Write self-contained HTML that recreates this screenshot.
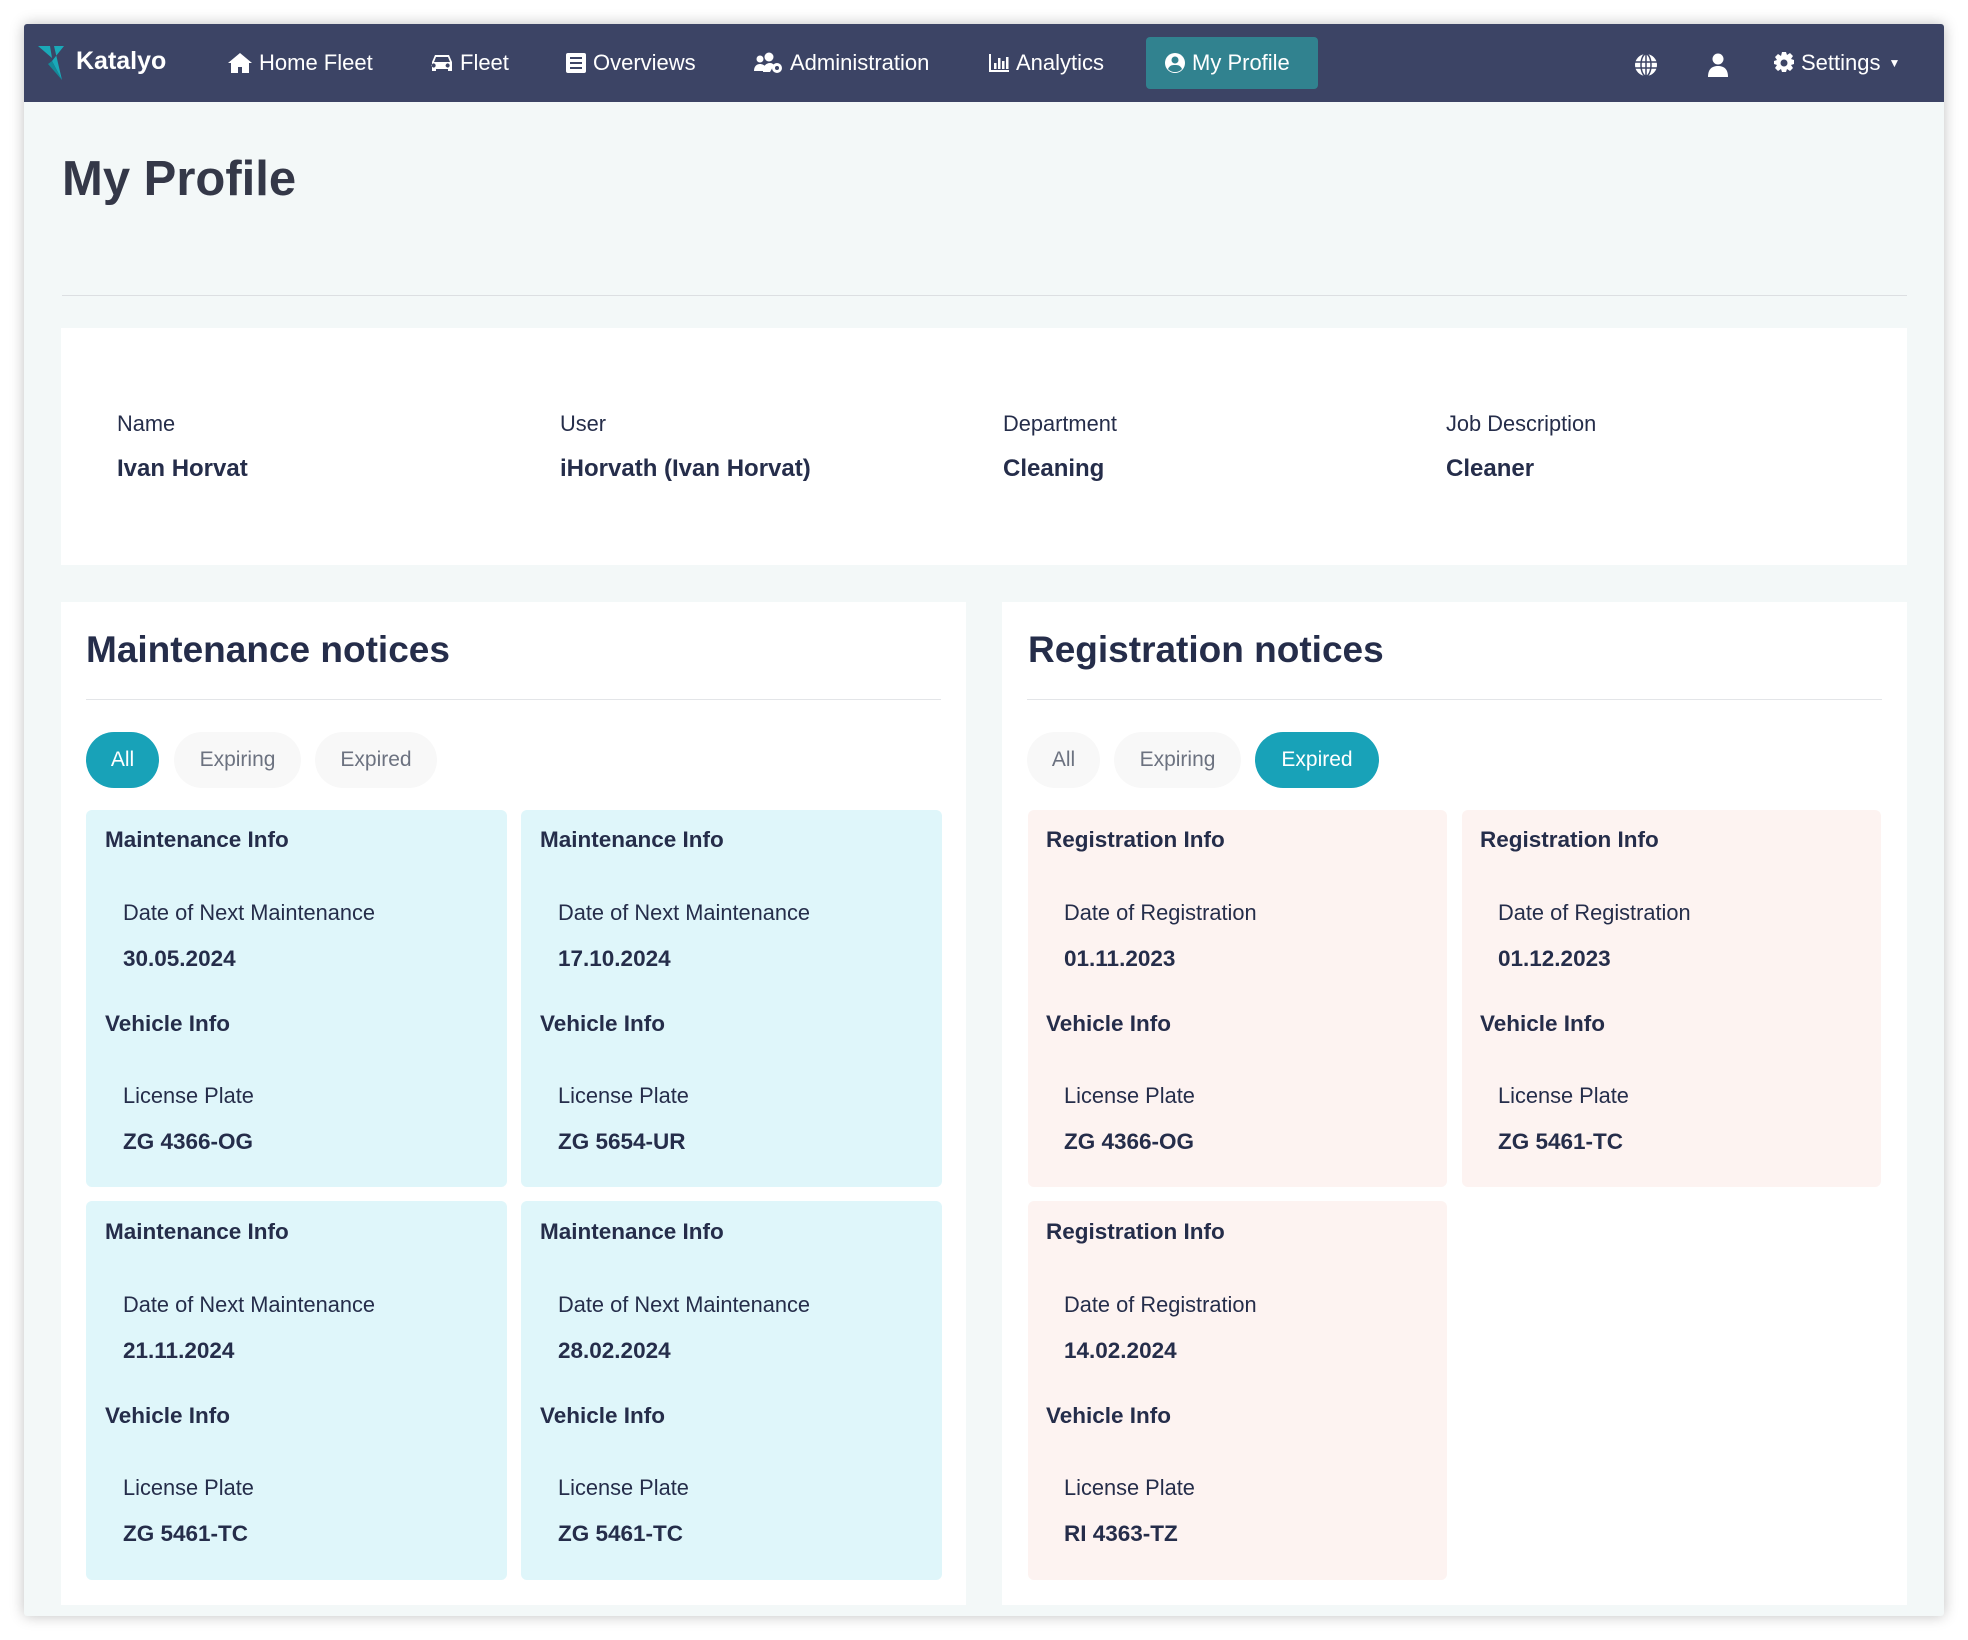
<!DOCTYPE html>
<html><head><meta charset="utf-8"><style>
*{margin:0;padding:0;box-sizing:border-box}
html,body{width:1968px;height:1640px;background:#fff;font-family:"Liberation Sans",Arial,sans-serif;overflow:hidden}
.win{position:absolute;left:24px;top:24px;width:1920px;height:1592px;background:#f3f8f8;box-shadow:0 0 14px rgba(0,0,0,.25);border-radius:3px;overflow:hidden}
.nav{position:absolute;left:0;top:0;width:1920px;height:78px;background:#3c4465}
.a{position:absolute;white-space:nowrap}
.ni{color:#fff;font-size:22px;top:26px;display:flex;align-items:center;gap:6px}
.ni svg{fill:#fff}
.t{color:#252d4a}
.card{position:absolute;border-radius:6px}
.m{background:#dff6fa}.r{background:#fdf3f1}
.pill{position:absolute;height:56px;border-radius:28px;font-size:21px;line-height:56px;text-align:center;background:#f8f8f8;color:#6c7280}
.pill.on{background:#18a2b8;color:#fff}
.h{font-size:22.5px;font-weight:bold}.l{font-size:21.8px}.v{font-size:22.5px;font-weight:bold}
.pl{font-size:21.8px}.pv{font-size:24px;font-weight:bold}
</style></head><body>
<div class="win">
 <div class="nav">
  <svg class="a" style="left:14px;top:20px" width="34" height="36" viewBox="0 0 34 36"><polygon points="0,2 12,2 14,14" fill="#1aa9b8"/><polygon points="16,2 26,2 14,17 24,36" fill="#1aa9b8"/><polygon points="14,17 24,36 10,20" fill="#138a99"/></svg>
  <div class="a" style="left:52px;top:23px;color:#fff;font-size:25px;font-weight:bold">Katalyo</div>
  <div class="a ni" style="left:203px"><svg width="26" height="22" viewBox="0 0 26 22"><path d="M13 1L1 11h3v10h7v-6h4v6h7V11h3z"/></svg>Home Fleet</div>
  <div class="a ni" style="left:406px"><svg width="24" height="20" viewBox="0 0 24 20"><path d="M5 2h14l3 7v9h-4v-2H6v2H2V9zM6 4l-2 5h16l-2-5zM5 11a2 2 0 100 3 2 2 0 000-3zm14 0a2 2 0 100 3 2 2 0 000-3z"/></svg>Fleet</div>
  <div class="a ni" style="left:541px"><svg width="22" height="22" viewBox="0 0 22 22"><rect x="1" y="1" width="20" height="20" rx="2"/><rect x="5" y="5" width="12" height="2" fill="#3c4465"/><rect x="5" y="10" width="12" height="2" fill="#3c4465"/><rect x="5" y="15" width="12" height="2" fill="#3c4465"/></svg>Overviews</div>
  <div class="a ni" style="left:730px"><svg width="30" height="22" viewBox="0 0 30 22"><circle cx="6" cy="7" r="3.5"/><circle cx="15" cy="5" r="4.5"/><path d="M0 19c0-5 3-7 6-7s5 2 6 3l-1 4z"/><path d="M9 20c0-6 3-9 7-9 2 0 3 1 4 2l-4 7z"/><circle cx="23" cy="16" r="5"/><circle cx="23" cy="16" r="2" fill="#3c4465"/></svg>Administration</div>
  <div class="a ni" style="left:964px"><svg width="22" height="20" viewBox="0 0 22 20"><path d="M1 1h2v16h18v2H1z"/><rect x="6" y="10" width="2.5" height="6"/><rect x="10" y="5" width="2.5" height="11"/><rect x="14" y="8" width="2.5" height="8"/><rect x="18" y="4" width="2.5" height="12"/></svg>Analytics</div>
  <div class="a" style="left:1122px;top:13px;width:172px;height:52px;background:#31828f;border-radius:4px"></div>
  <div class="a ni" style="left:1140px"><svg width="22" height="22" viewBox="0 0 22 22"><circle cx="11" cy="11" r="10"/><circle cx="11" cy="8" r="3.5" fill="#31828f"/><path d="M4 17c2-4 4-4 7-4s5 0 7 4c-2 2-4 3-7 3s-5-1-7-3z" fill="#31828f"/></svg>My Profile</div>
  <svg class="a" style="left:1610px;top:29px" width="24" height="24" viewBox="0 0 24 24"><circle cx="12" cy="12" r="11" fill="#fff"/><g stroke="#3c4465" stroke-width="1.5" fill="none"><ellipse cx="12" cy="12" rx="5" ry="11"/><line x1="12" y1="1" x2="12" y2="23"/><line x1="1" y1="9" x2="23" y2="9"/><line x1="1" y1="15" x2="23" y2="15"/></g></svg>
  <svg class="a" style="left:1683px;top:29px" width="22" height="24" viewBox="0 0 22 24"><circle cx="11" cy="6" r="5.5" fill="#fff"/><path d="M1 24c0-8 4-11 10-11s10 3 10 11z" fill="#fff"/></svg>
  <div class="a ni" style="left:1749px"><svg width="22" height="22" viewBox="0 0 22 22"><path d="M9 0h4l1 3 3-2 3 3-2 3 3 1v4l-3 1 2 3-3 3-3-2-1 3H9l-1-3-3 2-3-3 2-3-3-1V9l3-1-2-3 3-3 3 2z" fill="#fff"/><circle cx="11" cy="11" r="3.5" fill="#3c4465"/></svg>Settings<span style="font-size:12px;margin-left:2px">▼</span></div>
 </div>
 <div class="a t" style="left:38px;top:127px;font-size:49px;font-weight:bold;color:#343848">My Profile</div>
 <div class="a" style="left:38px;top:271px;width:1845px;height:1px;background:#dcdfe2"></div>
 <div class="a" style="left:37px;top:304px;width:1846px;height:237px;background:#fff"></div>
 <div class="a t pl" style="left:93px;top:387px">Name</div>
 <div class="a t pv" style="left:93px;top:431px">Ivan Horvat</div>
 <div class="a t pl" style="left:536px;top:387px">User</div>
 <div class="a t pv" style="left:536px;top:431px">iHorvath (Ivan Horvat)</div>
 <div class="a t pl" style="left:979px;top:387px">Department</div>
 <div class="a t pv" style="left:979px;top:431px">Cleaning</div>
 <div class="a t pl" style="left:1422px;top:387px">Job Description</div>
 <div class="a t pv" style="left:1422px;top:431px">Cleaner</div>

 <div class="a" style="left:37px;top:578px;width:905px;height:1003px;background:#fff"></div>
 <div class="a" style="left:978px;top:578px;width:905px;height:1003px;background:#fff"></div>
 <div class="a t" style="left:62px;top:605px;font-size:37px;font-weight:bold">Maintenance notices</div>
 <div class="a t" style="left:1004px;top:605px;font-size:37px;font-weight:bold">Registration notices</div>
 <div class="a" style="left:62px;top:675px;width:855px;height:1px;background:#e3e5e8"></div>
 <div class="a" style="left:1003px;top:675px;width:855px;height:1px;background:#e3e5e8"></div>
 <div class="pill on" style="left:62px;top:708px;width:73px">All</div>
 <div class="pill" style="left:150px;top:708px;width:127px">Expiring</div>
 <div class="pill" style="left:291px;top:708px;width:122px">Expired</div>
 <div class="pill" style="left:1003px;top:708px;width:73px">All</div>
 <div class="pill" style="left:1090px;top:708px;width:127px">Expiring</div>
 <div class="pill on" style="left:1231px;top:708px;width:124px">Expired</div>

 <div class="card m" style="left:62px;top:786px;width:421px;height:377px"></div>
 <div class="card m" style="left:497px;top:786px;width:421px;height:377px"></div>
 <div class="card m" style="left:62px;top:1177px;width:421px;height:379px"></div>
 <div class="card m" style="left:497px;top:1177px;width:421px;height:379px"></div>
 <div class="card r" style="left:1004px;top:786px;width:419px;height:377px"></div>
 <div class="card r" style="left:1438px;top:786px;width:419px;height:377px"></div>
 <div class="card r" style="left:1004px;top:1177px;width:419px;height:379px"></div>

 <div class="a t h" style="left:81px;top:803px">Maintenance Info</div><div class="a t l" style="left:99px;top:876px">Date of Next Maintenance</div><div class="a t v" style="left:99px;top:922px">30.05.2024</div><div class="a t h" style="left:81px;top:987px">Vehicle Info</div><div class="a t l" style="left:99px;top:1059px">License Plate</div><div class="a t v" style="left:99px;top:1105px">ZG 4366-OG</div>
 <div class="a t h" style="left:516px;top:803px">Maintenance Info</div><div class="a t l" style="left:534px;top:876px">Date of Next Maintenance</div><div class="a t v" style="left:534px;top:922px">17.10.2024</div><div class="a t h" style="left:516px;top:987px">Vehicle Info</div><div class="a t l" style="left:534px;top:1059px">License Plate</div><div class="a t v" style="left:534px;top:1105px">ZG 5654-UR</div>
 <div class="a t h" style="left:81px;top:1195px">Maintenance Info</div><div class="a t l" style="left:99px;top:1268px">Date of Next Maintenance</div><div class="a t v" style="left:99px;top:1314px">21.11.2024</div><div class="a t h" style="left:81px;top:1379px">Vehicle Info</div><div class="a t l" style="left:99px;top:1451px">License Plate</div><div class="a t v" style="left:99px;top:1497px">ZG 5461-TC</div>
 <div class="a t h" style="left:516px;top:1195px">Maintenance Info</div><div class="a t l" style="left:534px;top:1268px">Date of Next Maintenance</div><div class="a t v" style="left:534px;top:1314px">28.02.2024</div><div class="a t h" style="left:516px;top:1379px">Vehicle Info</div><div class="a t l" style="left:534px;top:1451px">License Plate</div><div class="a t v" style="left:534px;top:1497px">ZG 5461-TC</div>
 <div class="a t h" style="left:1022px;top:803px">Registration Info</div><div class="a t l" style="left:1040px;top:876px">Date of Registration</div><div class="a t v" style="left:1040px;top:922px">01.11.2023</div><div class="a t h" style="left:1022px;top:987px">Vehicle Info</div><div class="a t l" style="left:1040px;top:1059px">License Plate</div><div class="a t v" style="left:1040px;top:1105px">ZG 4366-OG</div>
 <div class="a t h" style="left:1456px;top:803px">Registration Info</div><div class="a t l" style="left:1474px;top:876px">Date of Registration</div><div class="a t v" style="left:1474px;top:922px">01.12.2023</div><div class="a t h" style="left:1456px;top:987px">Vehicle Info</div><div class="a t l" style="left:1474px;top:1059px">License Plate</div><div class="a t v" style="left:1474px;top:1105px">ZG 5461-TC</div>
 <div class="a t h" style="left:1022px;top:1195px">Registration Info</div><div class="a t l" style="left:1040px;top:1268px">Date of Registration</div><div class="a t v" style="left:1040px;top:1314px">14.02.2024</div><div class="a t h" style="left:1022px;top:1379px">Vehicle Info</div><div class="a t l" style="left:1040px;top:1451px">License Plate</div><div class="a t v" style="left:1040px;top:1497px">RI 4363-TZ</div>
</div>
</body></html>
